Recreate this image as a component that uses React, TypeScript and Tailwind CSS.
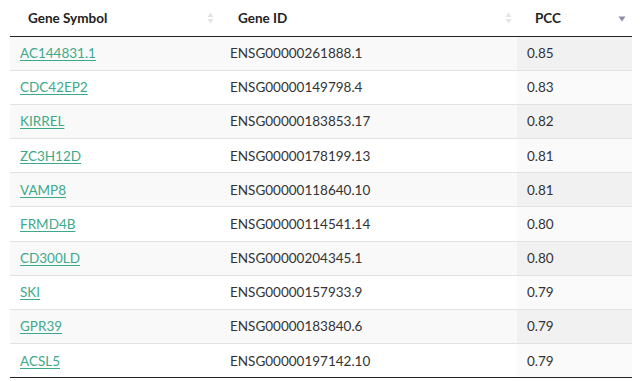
const rows = [
  ["AC144831.1", "ENSG00000261888.1", "0.85"],
  ["CDC42EP2", "ENSG00000149798.4", "0.83"],
  ["KIRREL", "ENSG00000183853.17", "0.82"],
  ["ZC3H12D", "ENSG00000178199.13", "0.81"],
  ["VAMP8", "ENSG00000118640.10", "0.81"],
  ["FRMD4B", "ENSG00000114541.14", "0.80"],
  ["CD300LD", "ENSG00000204345.1", "0.80"],
  ["SKI", "ENSG00000157933.9", "0.79"],
  ["GPR39", "ENSG00000183840.6", "0.79"],
  ["ACSL5", "ENSG00000197142.10", "0.79"],
];

function SortBoth() {
  return (
    <svg width="7" height="12" viewBox="0 0 7 12" className="shrink-0">
      <path d="M3.5 0.5 L6.5 5 L0.5 5 Z" fill="#e3e3e3" />
      <path d="M3.5 11.5 L6.5 7 L0.5 7 Z" fill="#e3e3e3" />
    </svg>
  );
}

function SortDesc() {
  return (
    <svg width="8" height="6" viewBox="0 0 8 6" className="mt-[3px] shrink-0">
      <path d="M0.5 0.5 L7.5 0.5 L4 5.5 Z" fill="#8c8cae" />
    </svg>
  );
}

export default function App() {
  return (
    <div
      className="min-h-screen bg-white pl-[10px] pr-[8px] text-[13.5px] text-[#333]"
      style={{ fontFamily: "Lato, 'Liberation Sans', sans-serif" }}
    >
      <table className="w-[622px] table-fixed border-collapse border-b border-[#222]">
        <colgroup>
          <col className="w-[210px]" />
          <col className="w-[297px]" />
          <col className="w-[115px]" />
        </colgroup>
        <thead>
          <tr className="h-[36px] border-b border-[#222] text-[#222]">
            <th className="pl-[18px] pr-[6px] text-left font-bold">
              <div className="flex items-center justify-between">
                <span>Gene Symbol</span>
                <SortBoth />
              </div>
            </th>
            <th className="pl-[18px] pr-[5px] text-left font-bold">
              <div className="flex items-center justify-between">
                <span>Gene ID</span>
                <SortBoth />
              </div>
            </th>
            <th className="pl-[18px] pr-[6px] text-left font-bold">
              <div className="flex items-center justify-between">
                <span>PCC</span>
                <SortDesc />
              </div>
            </th>
          </tr>
        </thead>
        <tbody>
          {rows.map(([sym, id, pcc], i) => (
            <tr
              key={sym}
              className={`h-[34.2px] border-t border-[#e2e2e2] first:border-t-0 ${
                i % 2 === 0 ? "bg-[#f9f9f9]" : "bg-white"
              }`}
            >
              <td className="px-[10px]">
                <a href="#" className="text-[#3da98b] underline underline-offset-2">
                  {sym}
                </a>
              </td>
              <td className="px-[10px]">{id}</td>
              <td
                className={`px-[10px] ${
                  i % 2 === 0 ? "bg-[#f1f1f1]" : "bg-[#fafafa]"
                }`}
              >
                {pcc}
              </td>
            </tr>
          ))}
        </tbody>
      </table>
    </div>
  );
}
